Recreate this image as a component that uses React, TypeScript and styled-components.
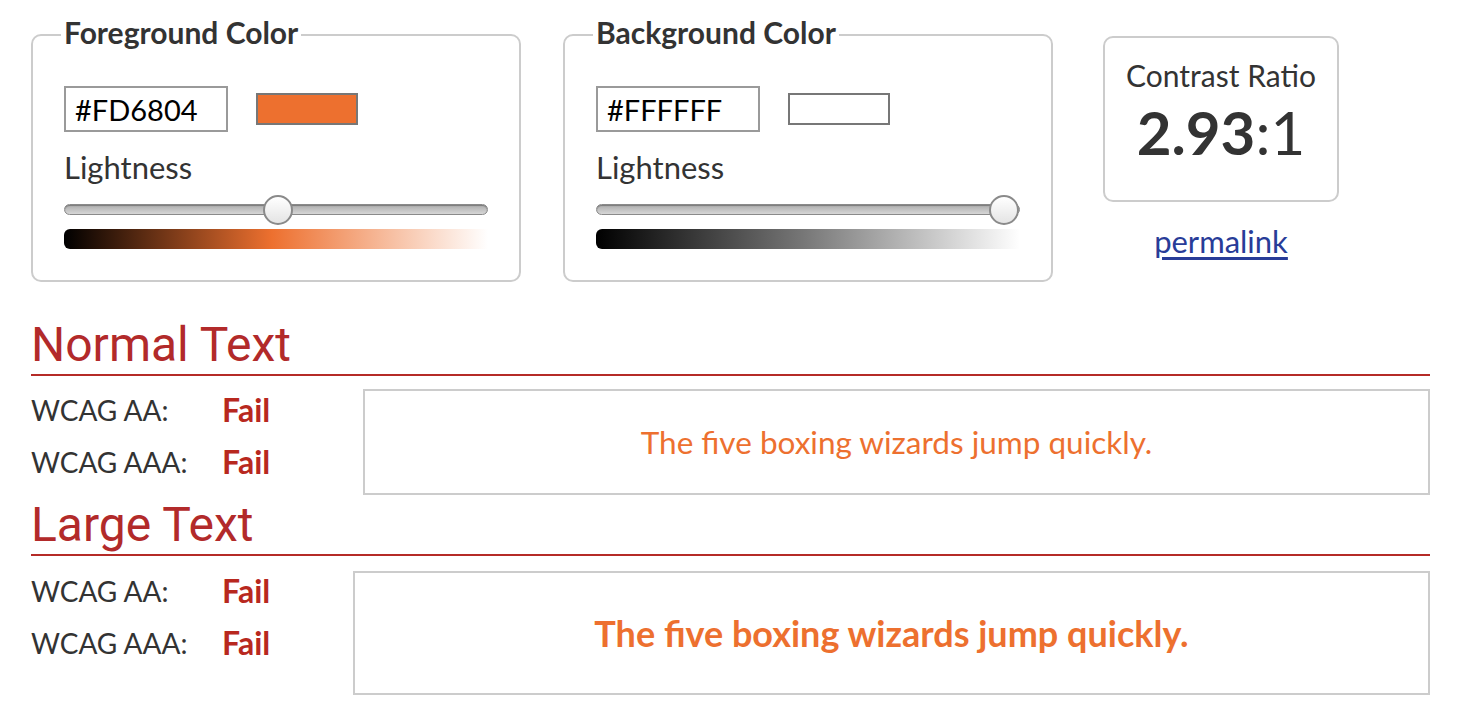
import React from 'react';
import styled, { createGlobalStyle } from 'styled-components';

const ORANGE = '#ED702F';
const RED = '#B22A2A';

const Global = createGlobalStyle`
  body {
    margin: 0;
    background: #fff;
    font-family: Lato, "Liberation Sans", sans-serif;
    color: #333;
  }
`;

const Page = styled.div`
  width: 1399px;
  padding: 14px 0 0 31px;
`;

const TopRow = styled.div`
  display: flex;
  align-items: flex-start;
`;

const ColorSet = styled.fieldset<{ $gap: number }>`
  box-sizing: border-box;
  width: 490px;
  margin: 0 ${p => p.$gap}px 0 0;
  border: 2px solid #ccc;
  border-radius: 10px;
  padding: 0 31px 31px;
`;

const Legend = styled.legend`
  font-size: 30px;
  font-weight: 700;
  line-height: 36px;
  padding: 0 3px 6px;
  margin-left: -3px;
  color: #333;
`;

const HexRow = styled.div`
  display: flex;
  align-items: center;
  gap: 28px;
  margin-top: 30px;
`;

const HexInput = styled.input`
  box-sizing: border-box;
  width: 164px;
  height: 46px;
  border: 2px solid #9a9a9a;
  padding: 0 9px;
  font-family: Lato, "Liberation Sans", sans-serif;
  font-size: 29px;
  color: #000;
  outline: none;
`;

const Swatch = styled.div<{ $color: string }>`
  box-sizing: border-box;
  width: 102px;
  height: 32px;
  border: 2px solid #777;
  background: ${p => p.$color};
`;

const Label = styled.div`
  margin-top: 17px;
  font-size: 31px;
  line-height: 36px;
  color: #333;
`;

const Track = styled.div`
  position: relative;
  box-sizing: border-box;
  margin-top: 19px;
  height: 11px;
  border: 1px solid #8a8a8a;
  border-radius: 6px;
  background: linear-gradient(to bottom, #adadad, #d6d6d6);
  box-shadow: inset 0 1px 1px rgba(0, 0, 0, 0.3);
`;

const Thumb = styled.div`
  position: absolute;
  top: 50%;
  width: 30px;
  height: 30px;
  box-sizing: border-box;
  border: 2px solid #8a8a8a;
  border-radius: 50%;
  background: linear-gradient(to bottom, #ffffff, #e4e4e4);
  transform: translate(-50%, -50%);
`;

const GradientBar = styled.div<{ $mid: string }>`
  margin-top: 14px;
  height: 20px;
  border-radius: 6px 0 0 6px;
  background: linear-gradient(to right, #000 0%, ${p => p.$mid} 49%, #fff 100%);
`;

const RatioColumn = styled.div`
  width: 236px;
  margin-top: 22px;
  display: flex;
  flex-direction: column;
  align-items: center;
`;

const RatioBox = styled.div`
  box-sizing: border-box;
  width: 236px;
  height: 166px;
  border: 2px solid #ccc;
  border-radius: 10px;
  padding-top: 20px;
  display: flex;
  flex-direction: column;
  align-items: center;
`;

const RatioTitle = styled.div`
  font-size: 30px;
  line-height: 34px;
  color: #333;
`;

const RatioValue = styled.div`
  margin-top: 10px;
  font-size: 60px;
  line-height: 60px;
  color: #333;
  & b { font-weight: 700; }
`;

const Permalink = styled.a`
  margin-top: 22px;
  font-size: 31px;
  line-height: 34px;
  color: #283c98;
  text-decoration: underline;
  text-underline-offset: 4px;
`;

const Section = styled.section<{ $top: number }>`
  margin-top: ${p => p.$top}px;
`;

const Heading = styled.h2`
  margin: 0;
  font-family: Roboto, "Liberation Sans", sans-serif;
  font-weight: 400;
  font-size: 48px;
  line-height: 56px;
  color: ${RED};
  border-bottom: 2px solid #b52b27;
  padding-bottom: 1px;
`;

const SectionBody = styled.div<{ $top: number }>`
  display: flex;
  align-items: flex-start;
  margin-top: ${p => p.$top}px;
`;

const Results = styled.div<{ $width: number }>`
  width: ${p => p.$width}px;
  flex: none;
`;

const ResultRow = styled.div`
  display: grid;
  grid-template-columns: 191px auto;
  height: 52px;
  line-height: 54px;
`;

const RowLabel = styled.span`
  font-size: 28px;
  color: #333;
`;

const Verdict = styled.span`
  font-size: 32px;
  font-weight: 700;
  color: #b8281e;
`;

const Preview = styled.div<{ $height: number; $top: number; $large?: boolean }>`
  flex: 1;
  box-sizing: border-box;
  height: ${p => p.$height}px;
  margin-top: ${p => p.$top}px;
  border: 2px solid #ccc;
  display: flex;
  align-items: center;
  justify-content: center;
  color: ${ORANGE};
  font-size: ${p => (p.$large ? 36 : 31.5)}px;
  font-weight: ${p => (p.$large ? 700 : 400)};
`;

type PickerProps = {
  title: string;
  hex: string;
  swatch: string;
  lightness: number;
  mid: string;
  gap: number;
};

const Picker = ({ title, hex, swatch, lightness, mid, gap }: PickerProps) => (
  <ColorSet $gap={gap}>
    <Legend>{title}</Legend>
    <HexRow>
      <HexInput defaultValue={hex} />
      <Swatch $color={swatch} />
    </HexRow>
    <Label>Lightness</Label>
    <Track>
      <Thumb style={{ left: `calc(15px + (100% - 30px) * ${lightness})` }} />
    </Track>
    <GradientBar $mid={mid} />
  </ColorSet>
);

const SAMPLE = 'The five boxing wizards jump quickly.';

export default function App() {
  return (
    <>
      <Global />
      <Page>
        <TopRow>
          <Picker title="Foreground Color" hex="#FD6804" swatch={ORANGE} lightness={0.504} mid={ORANGE} gap={42} />
          <Picker title="Background Color" hex="#FFFFFF" swatch="#FFFFFF" lightness={1} mid="#777" gap={50} />
          <RatioColumn>
            <RatioBox>
              <RatioTitle>Contrast Ratio</RatioTitle>
              <RatioValue>
                <b>2.93</b>:1
              </RatioValue>
            </RatioBox>
            <Permalink href="#">permalink</Permalink>
          </RatioColumn>
        </TopRow>

        <Section $top={35}>
          <Heading>Normal Text</Heading>
          <SectionBody $top={7}>
            <Results $width={332}>
              <ResultRow>
                <RowLabel>WCAG AA:</RowLabel>
                <Verdict>Fail</Verdict>
              </ResultRow>
              <ResultRow>
                <RowLabel>WCAG AAA:</RowLabel>
                <Verdict>Fail</Verdict>
              </ResultRow>
            </Results>
            <Preview $height={106} $top={6}>{SAMPLE}</Preview>
          </SectionBody>
        </Section>

        <Section $top={2}>
          <Heading>Large Text</Heading>
          <SectionBody $top={8}>
            <Results $width={322}>
              <ResultRow>
                <RowLabel>WCAG AA:</RowLabel>
                <Verdict>Fail</Verdict>
              </ResultRow>
              <ResultRow>
                <RowLabel>WCAG AAA:</RowLabel>
                <Verdict>Fail</Verdict>
              </ResultRow>
            </Results>
            <Preview $height={124} $top={7} $large>{SAMPLE}</Preview>
          </SectionBody>
        </Section>
      </Page>
    </>
  );
}
